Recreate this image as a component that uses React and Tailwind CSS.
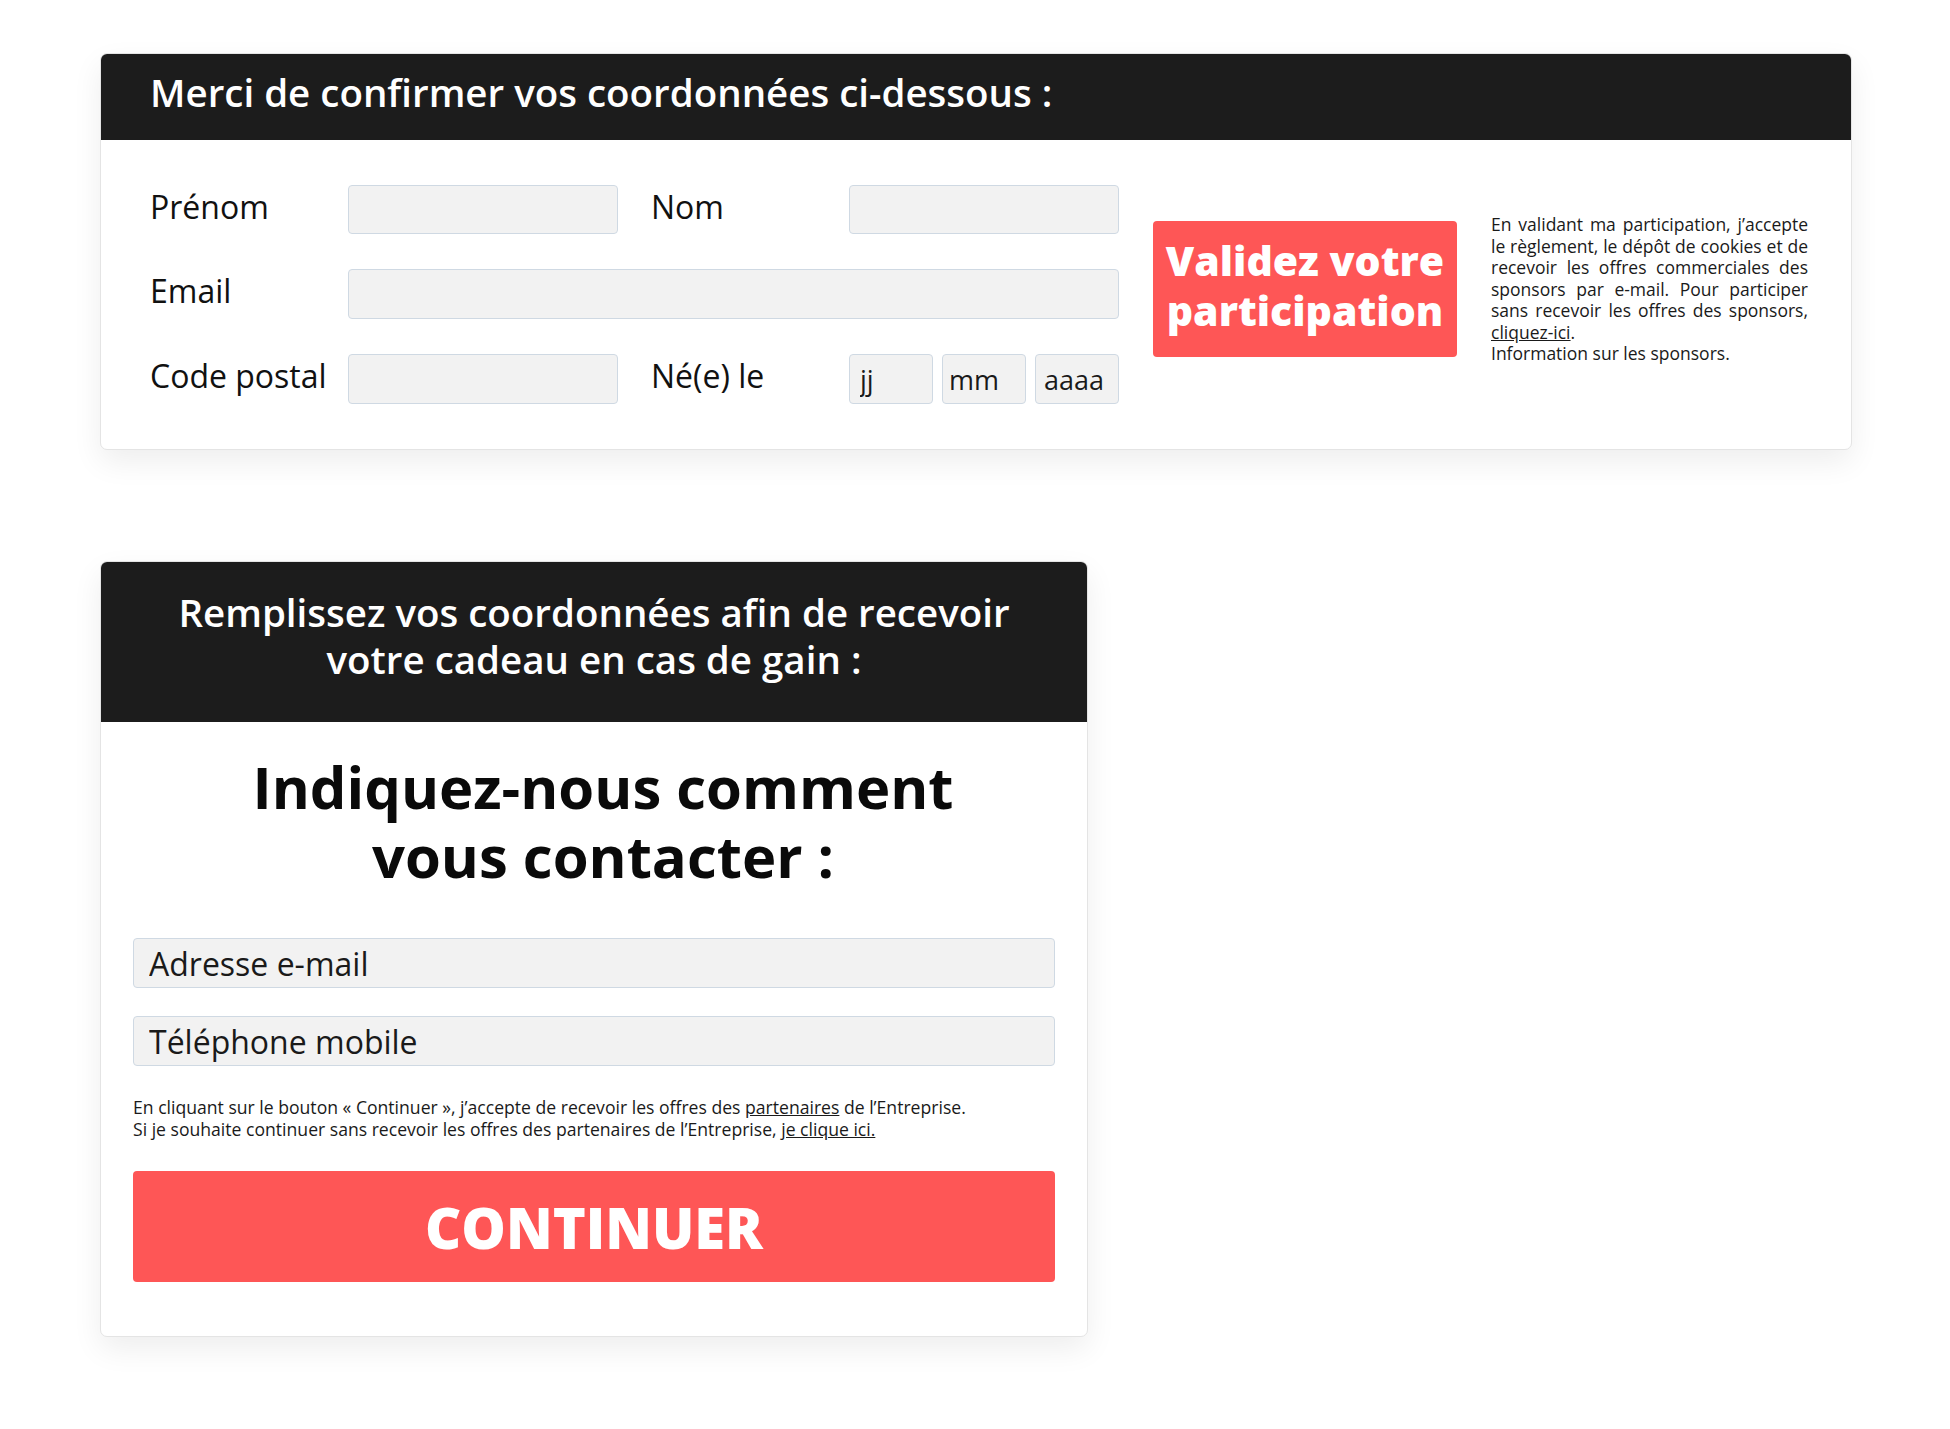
import React from "react";

const font = { fontFamily: '"Open Sans", "Noto Sans", sans-serif' };

function Field({ className = "", placeholder = "", textClass = "" }) {
  return (
    <input
      type="text"
      placeholder={placeholder}
      className={`block rounded-[4px] border border-[#cfd9e3] bg-[#f2f2f2] outline-none text-[#1a1a1a] placeholder:text-[#1a1a1a] ${textClass} ${className}`}
    />
  );
}

export default function App() {
  return (
    <div style={font} className="min-h-screen bg-white pt-[53px] pl-[100px] pb-[92px] text-[#111]">
      {/* Card 1 */}
      <div className="w-[1752px] overflow-hidden rounded-[7px] border border-[#e4e4e4] bg-white shadow-[0_12px_30px_rgba(0,0,0,0.07)]">
        <div className="h-[86px] bg-[#1c1c1c] pl-[49px] pt-[15px] text-[38.5px] font-semibold leading-[46px] text-white">
          Merci de confirmer vos coordonnées ci-dessous :
        </div>
        <div className="flex items-start pl-[49px] pt-[45px] pb-[45px]">
          <div className="grid grid-cols-[198px_270px_231px_270px] items-center gap-y-[35px] text-[32px] leading-[40px]">
            <div className="pb-[6px]">Prénom</div>
            <Field className="h-[49px] w-[270px]" />
            <div className="pl-[33px] pb-[6px]">Nom</div>
            <Field className="h-[49px] w-[270px]" />

            <div className="pb-[6px]">Email</div>
            <Field className="col-span-3 h-[50px] w-[771px]" />

            <div className="pb-[6px]">Code postal</div>
            <Field className="h-[50px] w-[270px]" />
            <div className="pl-[33px] pb-[6px]">Né(e) le</div>
            <div className="flex gap-[9px]">
              <Field className="h-[50px] w-[84px] px-[10px]" textClass="text-[27px]" placeholder="jj" />
              <Field className="h-[50px] w-[84px] px-[6px]" textClass="text-[27px]" placeholder="mm" />
              <Field className="h-[50px] w-[84px] px-[8px]" textClass="text-[27px]" placeholder="aaaa" />
            </div>
          </div>

          <button className="ml-[34px] mt-[36px] flex h-[136px] w-[304px] shrink-0 items-center justify-center rounded-[4px] bg-[#fe5656] pb-[8px] text-center text-[41px] font-extrabold leading-[50px] text-white">
            Validez votre
            <br />
            participation
          </button>

          <div className="ml-[34px] mt-[29px] w-[317px] shrink-0 text-[17.5px] leading-[21.5px] text-[#1a1a1a]">
            <div className="text-justify [text-align-last:justify]">En validant ma participation, j’accepte</div>
            <div className="text-justify [text-align-last:justify]">le règlement, le dépôt de cookies et de</div>
            <div className="text-justify [text-align-last:justify]">recevoir les offres commerciales des</div>
            <div className="text-justify [text-align-last:justify]">sponsors par e-mail. Pour participer</div>
            <div className="text-justify [text-align-last:justify]">sans recevoir les offres des sponsors,</div>
            <div>
              <a href="#" className="underline">cliquez-ici</a>.
            </div>
            <div>Information sur les sponsors.</div>
          </div>
        </div>
      </div>

      {/* Card 2 */}
      <div className="mt-[111px] w-[988px] overflow-hidden rounded-[7px] border border-[#e4e4e4] bg-white shadow-[0_12px_30px_rgba(0,0,0,0.07)]">
        <div className="h-[160px] bg-[#1c1c1c] pt-[27px] text-center text-[38.5px] font-semibold leading-[47px] text-white">
          Remplissez vos coordonnées afin de recevoir
          <br />
          votre cadeau en cas de gain :
        </div>
        <div className="px-[32px] pt-[30px] pb-[54px]">
          <h2 className="pl-[18px] text-center text-[58px] font-bold leading-[69px] text-[#0a0a0a]">
            Indiquez-nous comment
            <br />
            vous contacter :
          </h2>
          <Field
            className="mt-[48px] h-[50px] w-full px-[15px]"
            textClass="text-[32px]"
            placeholder="Adresse e-mail"
          />
          <Field
            className="mt-[28px] h-[50px] w-full px-[15px]"
            textClass="text-[32px]"
            placeholder="Téléphone mobile"
          />
          <p className="mt-[30px] text-[17.6px] leading-[22px] text-[#1a1a1a]">
            En cliquant sur le bouton « Continuer », j’accepte de recevoir les offres des{" "}
            <a href="#" className="underline">partenaires</a> de l’Entreprise.
            <br />
            Si je souhaite continuer sans recevoir les offres des partenaires de l’Entreprise,{" "}
            <a href="#" className="underline">je clique ici.</a>
          </p>
          <button className="mt-[31px] flex h-[111px] w-full items-center justify-center rounded-[4px] bg-[#fe5656] text-[56px] font-extrabold text-white">
            CONTINUER
          </button>
        </div>
      </div>
    </div>
  );
}
